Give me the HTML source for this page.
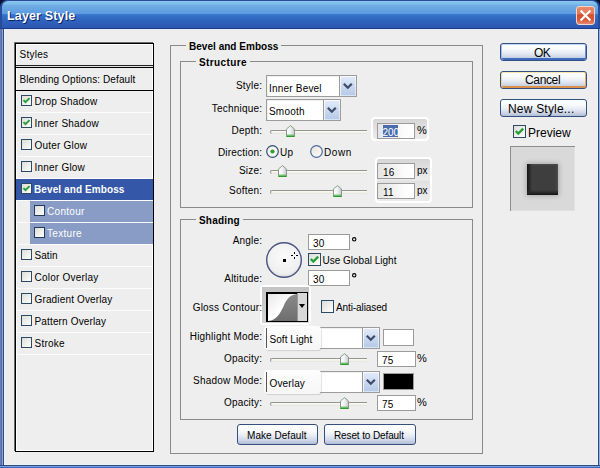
<!DOCTYPE html><html><head><meta charset="utf-8"><style>
html,body{margin:0;padding:0;}
body{width:600px;height:468px;position:relative;overflow:hidden;background:#0a1030;font-family:"Liberation Sans",sans-serif;}
.t{position:absolute;white-space:nowrap;line-height:1;font-family:"Liberation Sans",sans-serif;}
</style></head><body>
<div style="position:absolute;left:0px;top:0px;width:600px;height:468px;background:#2a4a9a;border-radius:7px 7px 0 0;"></div>
<div style="position:absolute;left:2px;top:1px;width:596px;height:27px;border-radius:6px 6px 0 0;background:linear-gradient(#9fd0f8 0px,#80c0ea 1px,#80c0ea 3px,#72aee6 4px,#5c9ae0 13px,#3d7ad2 13px,#3470c8 15px,#2f62bc 20px,#2c56b0 27px);"></div>
<div style="position:absolute;left:0px;top:28px;width:600px;height:1px;background:#1e3a8a;"></div>
<div style="position:absolute;left:0px;top:29px;width:1px;height:439px;background:#6e7cb4;"></div>
<div style="position:absolute;left:1px;top:29px;width:1px;height:439px;background:#5a6ca8;"></div>
<div style="position:absolute;left:2px;top:29px;width:1px;height:439px;background:#88a6de;"></div>
<div style="position:absolute;left:3px;top:29px;width:1px;height:439px;background:#2e4a80;"></div>
<div style="position:absolute;left:598px;top:29px;width:1px;height:439px;background:#2a4a80;"></div>
<div style="position:absolute;left:599px;top:29px;width:1px;height:439px;background:#90b0f0;"></div>
<div style="position:absolute;left:0px;top:465px;width:600px;height:1px;background:#2a4a80;"></div>
<div style="position:absolute;left:0px;top:466px;width:600px;height:1px;background:#7aa0e0;"></div>
<div style="position:absolute;left:0px;top:467px;width:600px;height:1px;background:#3a64b8;"></div>
<div style="position:absolute;left:4px;top:29px;width:594px;height:436px;background:#eeeeee;border-top:1px solid #e8ecf8;border-left:1px solid #f0f4ff;border-right:1px solid #f0f4ff;border-bottom:1px solid #f0f4ff;box-sizing:border-box;"></div>
<div class="t" style="left:7px;top:10px;font-size:12.5px;font-weight:bold;color:#fff;letter-spacing:0.15px;text-shadow:1px 1px 0 #0a246a;">Layer Style</div>
<div style="position:absolute;left:576px;top:6px;width:19px;height:19px;box-sizing:border-box;border:1px solid #f6d6c8;border-radius:3px;background:linear-gradient(#e88a6c 0%,#e07a5a 40%,#d4502e 45%,#d85a38 75%,#e48a70 100%);"><svg width="17" height="17" style="position:absolute;left:0;top:0"><path d="M3.6 3.6 L13.4 13.4 M13.4 3.6 L3.6 13.4" stroke="#fff" stroke-width="2.1"/></svg></div>
<div style="position:absolute;left:15px;top:43px;width:139px;height:409px;border:1px solid #000;box-sizing:border-box;background:#eeeeee;box-shadow:-1px -1px 0 #6a6a6a, inset 1px 1px 0 #fff, inset -1px -1px 0 #fff;"></div>
<div class="t" style="left:19.5px;top:50px;font-size:10px;font-weight:normal;color:#000;letter-spacing:0.25px;">Styles</div>
<div style="position:absolute;left:16px;top:65px;width:137px;height:1px;background:#222;"></div>
<div style="position:absolute;left:16px;top:66px;width:137px;height:1px;background:#e4e4e4;"></div>
<div style="position:absolute;left:16px;top:67px;width:137px;height:1px;background:#000;"></div>
<div class="t" style="left:19.5px;top:75px;font-size:10px;font-weight:normal;color:#000;letter-spacing:0.1px;">Blending Options: Default</div>
<div style="position:absolute;left:16px;top:90px;width:137px;height:1px;background:#000;"></div>
<div style="position:absolute;left:16px;top:112px;width:137px;height:1px;background:#fbfbfb;"></div>
<div style="position:absolute;left:21px;top:95px;width:9px;height:9px;border:1px solid #2c4a66;background:linear-gradient(135deg,#dcdcd7,#fff);"><svg width="9" height="9" viewBox="0 0 11 11" style="position:absolute;left:0;top:0"><path d="M1.8 5 L4.3 7.6 L9.2 2.6" stroke="#26a034" stroke-width="2.3" fill="none"/></svg></div>
<div class="t" style="left:34.5px;top:97px;font-size:10px;font-weight:normal;color:#000;letter-spacing:0.22px;">Drop Shadow</div>
<div style="position:absolute;left:16px;top:134px;width:137px;height:1px;background:#fbfbfb;"></div>
<div style="position:absolute;left:21px;top:117px;width:9px;height:9px;border:1px solid #2c4a66;background:linear-gradient(135deg,#dcdcd7,#fff);"><svg width="9" height="9" viewBox="0 0 11 11" style="position:absolute;left:0;top:0"><path d="M1.8 5 L4.3 7.6 L9.2 2.6" stroke="#26a034" stroke-width="2.3" fill="none"/></svg></div>
<div class="t" style="left:34.5px;top:119px;font-size:10px;font-weight:normal;color:#000;letter-spacing:0.22px;">Inner Shadow</div>
<div style="position:absolute;left:16px;top:156px;width:137px;height:1px;background:#fbfbfb;"></div>
<div style="position:absolute;left:21px;top:139px;width:9px;height:9px;border:1px solid #2c4a66;background:linear-gradient(135deg,#dcdcd7,#fff);"></div>
<div class="t" style="left:34.5px;top:141px;font-size:10px;font-weight:normal;color:#000;letter-spacing:0.22px;">Outer Glow</div>
<div style="position:absolute;left:16px;top:178px;width:137px;height:1px;background:#fbfbfb;"></div>
<div style="position:absolute;left:21px;top:161px;width:9px;height:9px;border:1px solid #2c4a66;background:linear-gradient(135deg,#dcdcd7,#fff);"></div>
<div class="t" style="left:34.5px;top:163px;font-size:10px;font-weight:normal;color:#000;letter-spacing:0.22px;">Inner Glow</div>
<div style="position:absolute;left:16px;top:179px;width:137px;height:21px;background:#3457a8;"></div>
<div style="position:absolute;left:16px;top:200px;width:137px;height:1px;background:#fbfbfb;"></div>
<div style="position:absolute;left:21px;top:183px;width:9px;height:9px;border:1px solid #2c4a66;background:linear-gradient(135deg,#dcdcd7,#fff);"><svg width="9" height="9" viewBox="0 0 11 11" style="position:absolute;left:0;top:0"><path d="M1.8 5 L4.3 7.6 L9.2 2.6" stroke="#26a034" stroke-width="2.3" fill="none"/></svg></div>
<div class="t" style="left:34px;top:185px;font-size:10px;font-weight:bold;color:#fff;letter-spacing:0.1px;">Bevel and Emboss</div>
<div style="position:absolute;left:30px;top:201px;width:123px;height:21px;background:#889cc5;"></div>
<div style="position:absolute;left:16px;top:222px;width:137px;height:1px;background:#fbfbfb;"></div>
<div style="position:absolute;left:34px;top:205px;width:9px;height:9px;border:1px solid #243c5c;background:linear-gradient(135deg,#dcdcd7,#fff);"></div>
<div class="t" style="left:47px;top:207px;font-size:10px;font-weight:normal;color:#fff;letter-spacing:0.3px;">Contour</div>
<div style="position:absolute;left:30px;top:223px;width:123px;height:21px;background:#889cc5;"></div>
<div style="position:absolute;left:16px;top:244px;width:137px;height:1px;background:#fbfbfb;"></div>
<div style="position:absolute;left:34px;top:227px;width:9px;height:9px;border:1px solid #243c5c;background:linear-gradient(135deg,#dcdcd7,#fff);"></div>
<div class="t" style="left:47px;top:229px;font-size:10px;font-weight:normal;color:#fff;letter-spacing:0.3px;">Texture</div>
<div style="position:absolute;left:16px;top:266px;width:137px;height:1px;background:#fbfbfb;"></div>
<div style="position:absolute;left:21px;top:249px;width:9px;height:9px;border:1px solid #2c4a66;background:linear-gradient(135deg,#dcdcd7,#fff);"></div>
<div class="t" style="left:34.5px;top:251px;font-size:10px;font-weight:normal;color:#000;letter-spacing:0.05px;">Satin</div>
<div style="position:absolute;left:16px;top:288px;width:137px;height:1px;background:#fbfbfb;"></div>
<div style="position:absolute;left:21px;top:271px;width:9px;height:9px;border:1px solid #2c4a66;background:linear-gradient(135deg,#dcdcd7,#fff);"></div>
<div class="t" style="left:34.5px;top:273px;font-size:10px;font-weight:normal;color:#000;letter-spacing:0.22px;">Color Overlay</div>
<div style="position:absolute;left:16px;top:310px;width:137px;height:1px;background:#fbfbfb;"></div>
<div style="position:absolute;left:21px;top:293px;width:9px;height:9px;border:1px solid #2c4a66;background:linear-gradient(135deg,#dcdcd7,#fff);"></div>
<div class="t" style="left:34.5px;top:295px;font-size:10px;font-weight:normal;color:#000;letter-spacing:0.15px;">Gradient Overlay</div>
<div style="position:absolute;left:16px;top:332px;width:137px;height:1px;background:#fbfbfb;"></div>
<div style="position:absolute;left:21px;top:315px;width:9px;height:9px;border:1px solid #2c4a66;background:linear-gradient(135deg,#dcdcd7,#fff);"></div>
<div class="t" style="left:34.5px;top:317px;font-size:10px;font-weight:normal;color:#000;letter-spacing:0.15px;">Pattern Overlay</div>
<div style="position:absolute;left:16px;top:354px;width:137px;height:1px;background:#fbfbfb;"></div>
<div style="position:absolute;left:21px;top:337px;width:9px;height:9px;border:1px solid #2c4a66;background:linear-gradient(135deg,#dcdcd7,#fff);"></div>
<div class="t" style="left:34.5px;top:339px;font-size:10px;font-weight:normal;color:#000;letter-spacing:0.22px;">Stroke</div>
<div style="position:absolute;left:170px;top:45px;width:313px;height:409px;border:1px solid #8a8a8a;box-sizing:border-box;"></div>
<div style="position:absolute;left:186px;top:44px;width:95px;height:3px;background:#eeeeee;"></div>
<div class="t" style="left:189px;top:42px;font-size:10px;font-weight:bold;color:#000;letter-spacing:0.03px;">Bevel and Emboss</div>
<div style="position:absolute;left:180px;top:61px;width:293px;height:147px;border:1px solid #8a8a8a;box-sizing:border-box;"></div>
<div style="position:absolute;left:196px;top:60px;width:54px;height:3px;background:#eeeeee;"></div>
<div class="t" style="left:199px;top:58px;font-size:10px;font-weight:bold;color:#000;letter-spacing:0.4px;">Structure</div>
<div style="position:absolute;left:180px;top:219px;width:293px;height:201px;border:1px solid #8a8a8a;box-sizing:border-box;"></div>
<div style="position:absolute;left:196px;top:218px;width:47px;height:3px;background:#eeeeee;"></div>
<div class="t" style="left:199px;top:216px;font-size:10px;font-weight:bold;color:#000;letter-spacing:0.2px;">Shading</div>
<div class="t" style="right:337.80px;top:81px;font-size:10px;font-weight:normal;color:#000;letter-spacing:0.2px;">Style:</div>
<div style="position:absolute;left:266px;top:75px;width:91px;height:22px;border:1px solid #9c9c9c;box-sizing:border-box;background:#fff;box-shadow:inset 1px 1px 0 #f0f0f0;"></div>
<div style="position:absolute;left:339px;top:76px;width:17px;height:20px;box-sizing:border-box;border-left:1px solid #9a9a9a;background:linear-gradient(#e4ecfa,#c6d6ee 60%,#b4c8e6);box-shadow:inset 1px 1px 0 rgba(255,255,255,0.7), inset -1px -1px 0 rgba(255,255,255,0.5);"><svg width="16" height="20" style="position:absolute;left:0;top:0"><path d="M3.8 7.8 L7.8 11.8 L11.8 7.8" stroke="#3c4a68" stroke-width="2.2" fill="none"/></svg></div>
<div class="t" style="left:269px;top:84px;font-size:10px;font-weight:normal;color:#000;letter-spacing:0.2px;">Inner Bevel</div>
<div class="t" style="right:337.80px;top:104px;font-size:10px;font-weight:normal;color:#000;letter-spacing:0.2px;">Technique:</div>
<div style="position:absolute;left:266px;top:99px;width:75px;height:22px;border:1px solid #9c9c9c;box-sizing:border-box;background:#fff;box-shadow:inset 1px 1px 0 #f0f0f0;"></div>
<div style="position:absolute;left:323px;top:100px;width:17px;height:20px;box-sizing:border-box;border-left:1px solid #9a9a9a;background:linear-gradient(#e4ecfa,#c6d6ee 60%,#b4c8e6);box-shadow:inset 1px 1px 0 rgba(255,255,255,0.7), inset -1px -1px 0 rgba(255,255,255,0.5);"><svg width="16" height="20" style="position:absolute;left:0;top:0"><path d="M3.8 7.8 L7.8 11.8 L11.8 7.8" stroke="#3c4a68" stroke-width="2.2" fill="none"/></svg></div>
<div class="t" style="left:269px;top:107px;font-size:10px;font-weight:normal;color:#000;letter-spacing:0.2px;">Smooth</div>
<div class="t" style="right:337.80px;top:126px;font-size:10px;font-weight:normal;color:#000;letter-spacing:0.2px;">Depth:</div>
<div style="position:absolute;left:270px;top:130px;width:97px;height:4px;border-top:1px solid #959590;border-left:1px solid #959590;border-radius:2px 0 0 2px;box-sizing:border-box;background:linear-gradient(#fbfbf5,#f0f0e8 60%,#e2e2da);"></div>
<svg style="position:absolute;left:286px;top:125px" width="10" height="12" viewBox="0 0 10 12"><defs><linearGradient id="tg" x1="0" y1="0" x2="1" y2="0"><stop offset="0" stop-color="#ffffff"/><stop offset="0.5" stop-color="#eef0f2"/><stop offset="1" stop-color="#c4c8d0"/></linearGradient></defs><path d="M0.5 4 L4.5 0.6 L8.5 4 L8.5 11.5 L0.5 11.5 Z" fill="url(#tg)" stroke="#8c968c" stroke-width="1"/><path d="M1 10.2 H8" stroke="#5cc05c" stroke-width="1.2"/><path d="M0.5 11.4 H8.5" stroke="#2e9a2e" stroke-width="1.2"/><path d="M0.8 4 L4.5 0.9" stroke="#9ccc9c" stroke-width="0.8"/></svg>
<div style="position:absolute;left:371px;top:117px;width:58px;height:24px;border:2px solid #fff;box-sizing:border-box;border-radius:4px;background:linear-gradient(#d6d6d6,#ececec);"></div>
<div style="position:absolute;left:377px;top:123px;width:38px;height:16px;border:1px solid #9b9b9b;box-sizing:border-box;background:linear-gradient(90deg,#e4e4e4,#fbfbfb 70%,#fff);"></div>
<div style="position:absolute;left:383px;top:125px;width:15px;height:12px;background:#4a6cae;"></div>
<div class="t" style="left:382.5px;top:128px;font-size:10px;font-weight:normal;color:#fff;letter-spacing:-0.1px;">200</div>
<div class="t" style="left:417px;top:126px;font-size:10px;font-weight:normal;color:#000;transform:scaleX(1.1);transform-origin:left;">%</div>
<div class="t" style="right:337.80px;top:148px;font-size:10px;font-weight:normal;color:#000;letter-spacing:0.2px;">Direction:</div>
<svg style="position:absolute;left:266px;top:145px" width="13" height="13"><circle cx="6.5" cy="6.5" r="5.8" fill="#f4f4f4" stroke="#34506e" stroke-width="1.2"/><circle cx="6.5" cy="6.5" r="2.1" fill="#2ea02e"/></svg>
<div class="t" style="left:280px;top:148px;font-size:10px;font-weight:normal;color:#000;letter-spacing:0.2px;">Up</div>
<svg style="position:absolute;left:310px;top:145px" width="13" height="13"><defs><radialGradient id="rg" cx="0.3" cy="0.3" r="0.8"><stop offset="0" stop-color="#ece6e2"/><stop offset="1" stop-color="#fbfbfb"/></radialGradient></defs><circle cx="6.5" cy="6.5" r="5.8" fill="url(#rg)" stroke="#4a6a98" stroke-width="1.2"/></svg>
<div class="t" style="left:324px;top:148px;font-size:10px;font-weight:normal;color:#000;letter-spacing:0.6px;">Down</div>
<div class="t" style="right:337.80px;top:166px;font-size:10px;font-weight:normal;color:#000;letter-spacing:0.2px;">Size:</div>
<div style="position:absolute;left:270px;top:170px;width:97px;height:4px;border-top:1px solid #959590;border-left:1px solid #959590;border-radius:2px 0 0 2px;box-sizing:border-box;background:linear-gradient(#fbfbf5,#f0f0e8 60%,#e2e2da);"></div>
<svg style="position:absolute;left:278px;top:165px" width="10" height="12" viewBox="0 0 10 12"><defs><linearGradient id="tg" x1="0" y1="0" x2="1" y2="0"><stop offset="0" stop-color="#ffffff"/><stop offset="0.5" stop-color="#eef0f2"/><stop offset="1" stop-color="#c4c8d0"/></linearGradient></defs><path d="M0.5 4 L4.5 0.6 L8.5 4 L8.5 11.5 L0.5 11.5 Z" fill="url(#tg)" stroke="#8c968c" stroke-width="1"/><path d="M1 10.2 H8" stroke="#5cc05c" stroke-width="1.2"/><path d="M0.5 11.4 H8.5" stroke="#2e9a2e" stroke-width="1.2"/><path d="M0.8 4 L4.5 0.9" stroke="#9ccc9c" stroke-width="0.8"/></svg>
<div style="position:absolute;left:375px;top:157px;width:57px;height:46px;border:2px solid #fff;box-sizing:border-box;border-radius:4px;background:linear-gradient(#d6d6d6,#ececec 50%,#e2e2e2 52%,#ececec);"></div>
<div style="position:absolute;left:377px;top:163px;width:38px;height:16px;border:1px solid #9b9b9b;box-sizing:border-box;background:linear-gradient(90deg,#e4e4e4,#fbfbfb 70%,#fff);"></div>
<div class="t" style="left:383px;top:168px;font-size:10px;font-weight:normal;color:#000;letter-spacing:0.2px;">16</div>
<div class="t" style="left:417px;top:166px;font-size:10px;font-weight:normal;color:#000;">px</div>
<div class="t" style="right:337.80px;top:186px;font-size:10px;font-weight:normal;color:#000;letter-spacing:0.2px;">Soften:</div>
<div style="position:absolute;left:270px;top:190px;width:97px;height:4px;border-top:1px solid #959590;border-left:1px solid #959590;border-radius:2px 0 0 2px;box-sizing:border-box;background:linear-gradient(#fbfbf5,#f0f0e8 60%,#e2e2da);"></div>
<svg style="position:absolute;left:333px;top:185px" width="10" height="12" viewBox="0 0 10 12"><defs><linearGradient id="tg" x1="0" y1="0" x2="1" y2="0"><stop offset="0" stop-color="#ffffff"/><stop offset="0.5" stop-color="#eef0f2"/><stop offset="1" stop-color="#c4c8d0"/></linearGradient></defs><path d="M0.5 4 L4.5 0.6 L8.5 4 L8.5 11.5 L0.5 11.5 Z" fill="url(#tg)" stroke="#8c968c" stroke-width="1"/><path d="M1 10.2 H8" stroke="#5cc05c" stroke-width="1.2"/><path d="M0.5 11.4 H8.5" stroke="#2e9a2e" stroke-width="1.2"/><path d="M0.8 4 L4.5 0.9" stroke="#9ccc9c" stroke-width="0.8"/></svg>
<div style="position:absolute;left:377px;top:183px;width:38px;height:16px;border:1px solid #9b9b9b;box-sizing:border-box;background:linear-gradient(90deg,#e4e4e4,#fbfbfb 70%,#fff);"></div>
<div class="t" style="left:383px;top:188px;font-size:10px;font-weight:normal;color:#000;letter-spacing:0.2px;">11</div>
<div class="t" style="left:417px;top:186px;font-size:10px;font-weight:normal;color:#000;">px</div>
<div class="t" style="right:337.80px;top:236px;font-size:10px;font-weight:normal;color:#000;letter-spacing:0.2px;">Angle:</div>
<svg style="position:absolute;left:265px;top:241px" width="38" height="38"><defs><radialGradient id="cg" cx="0.5" cy="0.4" r="0.6"><stop offset="0" stop-color="#fafafa"/><stop offset="0.8" stop-color="#f0f0f0"/><stop offset="1" stop-color="#dcdcdc"/></radialGradient></defs><circle cx="19" cy="19" r="17.3" fill="url(#cg)" stroke="#4c5480" stroke-width="1.4"/><rect x="18" y="18" width="3" height="3" fill="#000"/><path d="M26 14.5 h2 M31 14.5 h2 M29.5 11 v2 M29.5 16 v2" stroke="#000" stroke-width="1"/></svg>
<div style="position:absolute;left:308px;top:234px;width:42px;height:16px;border:1px solid #9b9b9b;box-sizing:border-box;background:#fff;"></div>
<div class="t" style="left:313px;top:239px;font-size:10px;font-weight:normal;color:#000;letter-spacing:0.2px;">30</div>
<svg style="position:absolute;left:351px;top:236px" width="7" height="7"><circle cx="3.2" cy="3.3" r="1.7" fill="none" stroke="#000" stroke-width="1.1"/></svg>
<div style="position:absolute;left:308px;top:253px;width:11px;height:11px;border:1px solid #2c4a66;background:linear-gradient(135deg,#dcdcd7,#fff);"><svg width="11" height="11" viewBox="0 0 11 11" style="position:absolute;left:0;top:0"><path d="M1.8 5 L4.3 7.6 L9.2 2.6" stroke="#26a034" stroke-width="2.3" fill="none"/></svg></div>
<div class="t" style="left:322.5px;top:256px;font-size:10px;font-weight:normal;color:#000;">Use Global Light</div>
<div class="t" style="right:337.80px;top:274px;font-size:10px;font-weight:normal;color:#000;letter-spacing:0.2px;">Altitude:</div>
<div style="position:absolute;left:308px;top:270px;width:42px;height:16px;border:1px solid #9b9b9b;box-sizing:border-box;background:#fff;"></div>
<div class="t" style="left:313px;top:275px;font-size:10px;font-weight:normal;color:#000;letter-spacing:0.2px;">30</div>
<svg style="position:absolute;left:351px;top:272px" width="7" height="7"><circle cx="3.2" cy="3.3" r="1.7" fill="none" stroke="#000" stroke-width="1.1"/></svg>
<div style="position:absolute;left:260px;top:285px;width:51px;height:40px;border-radius:4px;background:#fff;"></div>
<div style="position:absolute;left:262px;top:287px;width:47px;height:36px;background:linear-gradient(#c4c4c4,#d4d4d4);"></div>
<div style="position:absolute;left:266px;top:292px;width:42px;height:30px;border:1px solid #000;border-top:2px solid #000;border-left:2px solid #000;box-sizing:border-box;background:#d8d8d8;"></div>
<svg style="position:absolute;left:268px;top:294px" width="29" height="27" viewBox="0 0 30 28" preserveAspectRatio="none"><defs><linearGradient id="wg" x1="0" y1="0" x2="1" y2="1"><stop offset="0" stop-color="#e8e8e8"/><stop offset="0.5" stop-color="#ffffff"/><stop offset="1" stop-color="#f4f4f4"/></linearGradient><linearGradient id="gg" x1="0" y1="0" x2="0" y2="1"><stop offset="0" stop-color="#8a8a8a"/><stop offset="1" stop-color="#6e6e6e"/></linearGradient></defs><rect width="30" height="28" fill="url(#wg)"/><path d="M0 28 C9 27 12 21 16 13 C19 5 23 1 30 0 L30 28 Z" fill="url(#gg)"/></svg>
<div style="position:absolute;left:297px;top:293px;width:10px;height:28px;background:#d8d8d8;border-left:1px solid #999;box-sizing:border-box;"></div>
<svg style="position:absolute;left:298px;top:304px" width="8" height="5"><path d="M1 0 L7 0 L4 4 Z" fill="#000"/></svg>
<div class="t" style="right:337.80px;top:303px;font-size:10px;font-weight:normal;color:#000;letter-spacing:0.2px;">Gloss Contour:</div>
<div style="position:absolute;left:321px;top:300px;width:11px;height:11px;border:1px solid #2c4a66;background:linear-gradient(135deg,#dcdcd7,#fff);"></div>
<div class="t" style="left:336px;top:303px;font-size:10px;font-weight:normal;color:#000;letter-spacing:-0.1px;">Anti-aliased</div>
<div class="t" style="right:337.80px;top:332px;font-size:10px;font-weight:normal;color:#000;letter-spacing:0.2px;">Highlight Mode:</div>
<div style="position:absolute;left:265px;top:327px;width:115px;height:22px;border:1px solid #9c9c9c;box-sizing:border-box;background:#fff;box-shadow:inset 1px 1px 0 #f0f0f0;"></div>
<div style="position:absolute;left:362px;top:328px;width:17px;height:20px;box-sizing:border-box;border-left:1px solid #9a9a9a;background:linear-gradient(#e4ecfa,#c6d6ee 60%,#b4c8e6);box-shadow:inset 1px 1px 0 rgba(255,255,255,0.7), inset -1px -1px 0 rgba(255,255,255,0.5);"><svg width="16" height="20" style="position:absolute;left:0;top:0"><path d="M3.8 7.8 L7.8 11.8 L11.8 7.8" stroke="#3c4a68" stroke-width="2.2" fill="none"/></svg></div>
<div style="position:absolute;left:264px;top:326px;width:57px;height:24px;border-radius:4px;background:linear-gradient(#fdfdfd,#f6f6f6);box-shadow:1px 1px 1px rgba(0,0,0,0.12);"></div>
<div style="position:absolute;left:266px;top:328px;width:1px;height:20px;background:#555;"></div>
<div class="t" style="left:269.5px;top:335px;font-size:10px;font-weight:normal;color:#000;letter-spacing:0.05px;">Soft Light</div>
<div style="position:absolute;left:383px;top:329px;width:31px;height:17px;border:1px solid #9b9b9b;box-sizing:border-box;background:#fff;"></div>
<div class="t" style="right:337.80px;top:354px;font-size:10px;font-weight:normal;color:#000;letter-spacing:0.2px;">Opacity:</div>
<div style="position:absolute;left:270px;top:358px;width:97px;height:4px;border-top:1px solid #959590;border-left:1px solid #959590;border-radius:2px 0 0 2px;box-sizing:border-box;background:linear-gradient(#fbfbf5,#f0f0e8 60%,#e2e2da);"></div>
<svg style="position:absolute;left:340px;top:353px" width="10" height="12" viewBox="0 0 10 12"><defs><linearGradient id="tg" x1="0" y1="0" x2="1" y2="0"><stop offset="0" stop-color="#ffffff"/><stop offset="0.5" stop-color="#eef0f2"/><stop offset="1" stop-color="#c4c8d0"/></linearGradient></defs><path d="M0.5 4 L4.5 0.6 L8.5 4 L8.5 11.5 L0.5 11.5 Z" fill="url(#tg)" stroke="#8c968c" stroke-width="1"/><path d="M1 10.2 H8" stroke="#5cc05c" stroke-width="1.2"/><path d="M0.5 11.4 H8.5" stroke="#2e9a2e" stroke-width="1.2"/><path d="M0.8 4 L4.5 0.9" stroke="#9ccc9c" stroke-width="0.8"/></svg>
<div style="position:absolute;left:377px;top:351px;width:39px;height:16px;border:1px solid #9b9b9b;box-sizing:border-box;background:#fff;"></div>
<div class="t" style="left:382px;top:356px;font-size:10px;font-weight:normal;color:#000;letter-spacing:0.2px;">75</div>
<div class="t" style="left:417px;top:354px;font-size:10px;font-weight:normal;color:#000;transform:scaleX(1.1);transform-origin:left;">%</div>
<div class="t" style="right:337.80px;top:376px;font-size:10px;font-weight:normal;color:#000;letter-spacing:0.2px;">Shadow Mode:</div>
<div style="position:absolute;left:265px;top:371px;width:115px;height:22px;border:1px solid #9c9c9c;box-sizing:border-box;background:#fff;box-shadow:inset 1px 1px 0 #f0f0f0;"></div>
<div style="position:absolute;left:362px;top:372px;width:17px;height:20px;box-sizing:border-box;border-left:1px solid #9a9a9a;background:linear-gradient(#e4ecfa,#c6d6ee 60%,#b4c8e6);box-shadow:inset 1px 1px 0 rgba(255,255,255,0.7), inset -1px -1px 0 rgba(255,255,255,0.5);"><svg width="16" height="20" style="position:absolute;left:0;top:0"><path d="M3.8 7.8 L7.8 11.8 L11.8 7.8" stroke="#3c4a68" stroke-width="2.2" fill="none"/></svg></div>
<div style="position:absolute;left:264px;top:370px;width:57px;height:24px;border-radius:4px;background:linear-gradient(#fdfdfd,#f6f6f6);box-shadow:1px 1px 1px rgba(0,0,0,0.12);"></div>
<div style="position:absolute;left:266px;top:372px;width:1px;height:20px;background:#555;"></div>
<div class="t" style="left:269.5px;top:379px;font-size:10px;font-weight:normal;color:#000;letter-spacing:0.15px;">Overlay</div>
<div style="position:absolute;left:383px;top:373px;width:31px;height:17px;border:1px solid #9b9b9b;box-sizing:border-box;background:#000;"></div>
<div class="t" style="right:337.80px;top:398px;font-size:10px;font-weight:normal;color:#000;letter-spacing:0.2px;">Opacity:</div>
<div style="position:absolute;left:270px;top:402px;width:97px;height:4px;border-top:1px solid #959590;border-left:1px solid #959590;border-radius:2px 0 0 2px;box-sizing:border-box;background:linear-gradient(#fbfbf5,#f0f0e8 60%,#e2e2da);"></div>
<svg style="position:absolute;left:340px;top:397px" width="10" height="12" viewBox="0 0 10 12"><defs><linearGradient id="tg" x1="0" y1="0" x2="1" y2="0"><stop offset="0" stop-color="#ffffff"/><stop offset="0.5" stop-color="#eef0f2"/><stop offset="1" stop-color="#c4c8d0"/></linearGradient></defs><path d="M0.5 4 L4.5 0.6 L8.5 4 L8.5 11.5 L0.5 11.5 Z" fill="url(#tg)" stroke="#8c968c" stroke-width="1"/><path d="M1 10.2 H8" stroke="#5cc05c" stroke-width="1.2"/><path d="M0.5 11.4 H8.5" stroke="#2e9a2e" stroke-width="1.2"/><path d="M0.8 4 L4.5 0.9" stroke="#9ccc9c" stroke-width="0.8"/></svg>
<div style="position:absolute;left:377px;top:395px;width:39px;height:16px;border:1px solid #9b9b9b;box-sizing:border-box;background:#fff;"></div>
<div class="t" style="left:382px;top:400px;font-size:10px;font-weight:normal;color:#000;letter-spacing:0.2px;">75</div>
<div class="t" style="left:417px;top:398px;font-size:10px;font-weight:normal;color:#000;transform:scaleX(1.1);transform-origin:left;">%</div>
<div style="position:absolute;left:237px;top:424px;width:81px;height:21px;border:1px solid #34507e;border-radius:3px;box-sizing:border-box;background:linear-gradient(#ffffff 0%,#f9fafc 30%,#e8ecf3 55%,#cfd7e7 80%,#b0bcd6 100%);"></div>
<div class="t" style="left:247px;top:431px;font-size:10px;font-weight:normal;color:#000;letter-spacing:0.05px;">Make Default</div>
<div style="position:absolute;left:324px;top:424px;width:92px;height:21px;border:1px solid #34507e;border-radius:3px;box-sizing:border-box;background:linear-gradient(#ffffff 0%,#f9fafc 30%,#e8ecf3 55%,#cfd7e7 80%,#b0bcd6 100%);"></div>
<div class="t" style="left:334px;top:431px;font-size:10px;font-weight:normal;color:#000;letter-spacing:-0.12px;">Reset to Default</div>
<div style="position:absolute;left:500px;top:43px;width:87px;height:18px;border:1px solid #34507e;border-radius:3px;box-sizing:border-box;background:linear-gradient(#ffffff 0%,#f9fafc 30%,#e8ecf3 55%,#cfd7e7 80%,#b0bcd6 100%);box-shadow:inset 0 1px 0 0 #c4d6f8, inset 1px 0 0 0 #a0bcf0, inset -1px 0 0 0 #6a90d8, inset 0 -2px 0 0 #3f68c0;"></div>
<div class="t" style="left:534px;top:47px;font-size:12px;font-weight:normal;color:#000;letter-spacing:-0.5px;">OK</div>
<div style="position:absolute;left:500px;top:71px;width:87px;height:18px;border:1px solid #34507e;border-radius:3px;box-sizing:border-box;background:linear-gradient(#ffffff 0%,#f9fafc 30%,#e8ecf3 55%,#cfd7e7 80%,#b0bcd6 100%);box-shadow:inset 0 1px 0 0 #fbe6b0, inset 1px 0 0 0 #f6d590, inset -1px 0 0 0 #e8b060, inset 0 -2px 0 0 #d8924a;"></div>
<div class="t" style="left:525px;top:74px;font-size:12px;font-weight:normal;color:#000;letter-spacing:-0.35px;">Cancel</div>
<div style="position:absolute;left:500px;top:99px;width:87px;height:18px;border:1px solid #34507e;border-radius:3px;box-sizing:border-box;background:linear-gradient(#ffffff 0%,#f9fafc 30%,#e8ecf3 55%,#cfd7e7 80%,#b0bcd6 100%);"></div>
<div class="t" style="left:508px;top:103px;font-size:12px;font-weight:normal;color:#000;letter-spacing:0.2px;">New Style...</div>
<div style="position:absolute;left:513px;top:125px;width:11px;height:11px;border:1px solid #2c4a66;background:linear-gradient(135deg,#dcdcd7,#fff);"><svg width="11" height="11" viewBox="0 0 11 11" style="position:absolute;left:0;top:0"><path d="M1.8 5 L4.3 7.6 L9.2 2.6" stroke="#26a034" stroke-width="2.3" fill="none"/></svg></div>
<div class="t" style="left:528px;top:127px;font-size:12px;font-weight:normal;color:#000;">Preview</div>
<div style="position:absolute;left:510px;top:146px;width:65px;height:65px;border-top:1px solid #8c8c8c;border-left:1px solid #8c8c8c;box-sizing:border-box;background:#d9d9d9;box-shadow:inset -1px -1px 0 #e2e2e2;"></div>
<div style="position:absolute;left:527px;top:164px;width:31px;height:31px;background:#3e3e3e;box-shadow:0 0 5px 1px rgba(0,0,0,0.22);overflow:hidden"><div style="position:absolute;left:0;top:0;width:5px;height:31px;background:linear-gradient(90deg,#141414,#2a2a2a 50%,rgba(62,62,62,0))"></div><div style="position:absolute;left:0;bottom:0;width:31px;height:5px;background:linear-gradient(0deg,#141414,#2a2a2a 50%,rgba(62,62,62,0))"></div><div style="position:absolute;right:0;top:0;width:3px;height:26px;background:linear-gradient(270deg,#4c4c4c,rgba(62,62,62,0))"></div><div style="position:absolute;left:4px;top:0;width:27px;height:2px;background:linear-gradient(180deg,#4a4a4a,rgba(62,62,62,0))"></div></div>
</body></html>
